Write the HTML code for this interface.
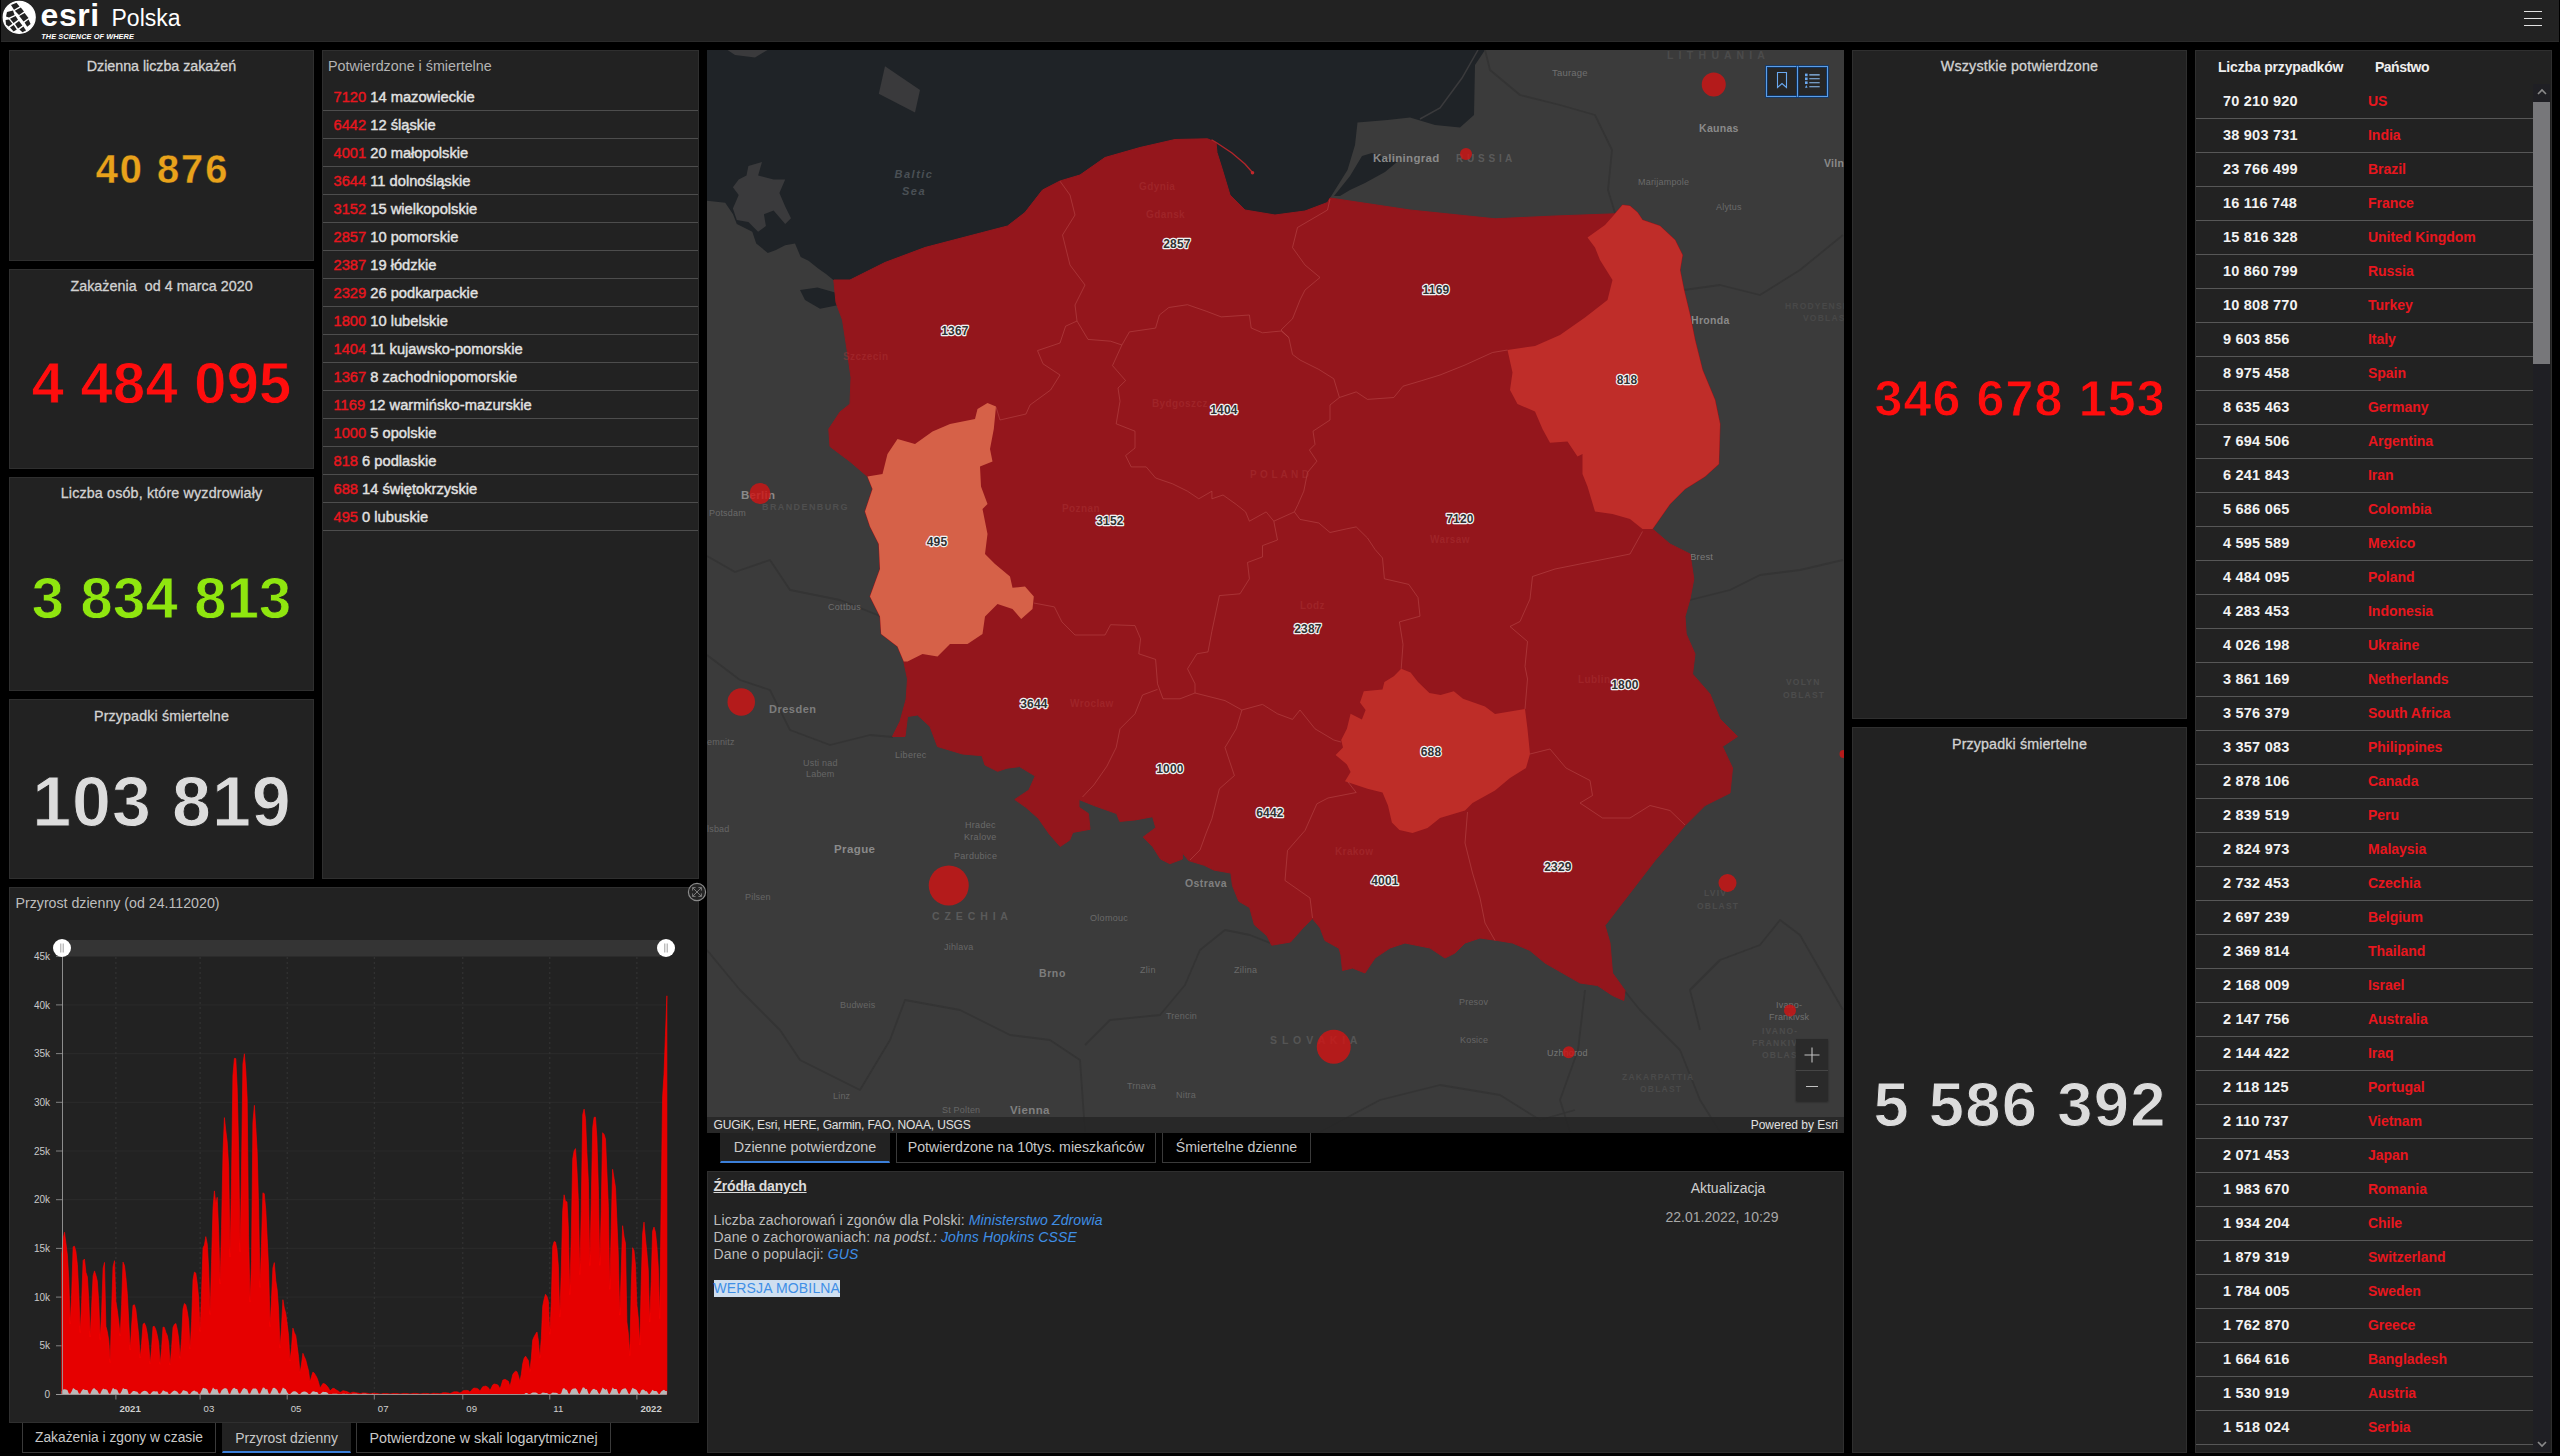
<!DOCTYPE html>
<html lang="pl"><head><meta charset="utf-8"><title>COVID-19 Polska</title>
<style>
html,body{margin:0;padding:0;background:#000;width:2560px;height:1456px;overflow:hidden;}
body{font-family:"Liberation Sans",sans-serif;color:#d4d4d4;position:relative;}
.abs{position:absolute;}
.panel{position:absolute;background:#222;border:1px solid #2f2f2f;box-sizing:border-box;overflow:hidden;}
#hdr{position:absolute;left:1px;top:0;width:2558px;height:42px;background:#222;border-bottom:1px solid #2b2b2b;box-sizing:border-box;}
.ptitle{position:absolute;left:0;right:0;text-align:center;font-size:14.3px;color:#d2d2d2;white-space:nowrap;-webkit-text-stroke:0.3px #d2d2d2;}
.big{position:absolute;left:0;right:0;text-align:center;white-space:nowrap;box-sizing:border-box;}
.t{position:absolute;white-space:nowrap;}
.lrow{position:absolute;left:0;right:0;height:28px;box-sizing:border-box;border-bottom:1px solid #4d4d4d;padding-left:10.5px;font-size:14.7px;line-height:29px;color:#e2e2e2;white-space:nowrap;-webkit-text-stroke:0.4px currentColor;}
.lrow .rn{color:#e8161e;-webkit-text-stroke:0.4px #e8161e;}
.crow{position:absolute;left:0;width:337px;height:34px;box-sizing:border-box;border-bottom:1px solid #575757;font-size:14.5px;line-height:33px;color:#f2f2f2;white-space:nowrap;font-weight:bold;}
.crow .cn{position:absolute;left:27px;letter-spacing:0.22px;}
.crow .cc{position:absolute;left:172px;color:#e8161e;font-size:14px;letter-spacing:-0.03px;}
.tab{position:absolute;height:30px;box-sizing:border-box;background:#000;border:1px solid #3a3a3a;border-top:none;color:#c8c8c8;font-size:13.8px;line-height:28px;text-align:center;white-space:nowrap;}
.tab.act{background:#222;border-color:#222;border-bottom:2px solid #3b7fd9;}
.src{font-size:14px;line-height:17px;color:#bdbdbd;letter-spacing:0.12px;}
.src .lk{color:#3f8fe6;}

</style></head>
<body>
<div id="hdr">
<svg class="abs" style="left:1px;top:0" width="40" height="40" viewBox="0 0 40 40">
<circle cx="17.2" cy="17.3" r="16" fill="#fff" stroke="#fff" stroke-width="1.2"/>
<g fill="#222">
<path d="M9 5 L14.5 2.8 L17.5 6.5 L12 9.8 Z"/>
<path d="M12.8 10.8 L18.8 7.6 L22 11.6 L17 15 Z"/>
<path d="M5 12 L11 10.6 L12.6 15 L7 17.6 L4 16.5 Z"/>
<path d="M8 18.8 L13.6 16 L16 19.8 L11.6 23 Z"/>
<path d="M3.6 20 L7 19.6 L10.4 23.8 L6.6 26.4 L4 24.5 Z"/>
<path d="M17.2 16 L22.6 13 L26.5 18 L21.6 21.4 Z"/>
<path d="M13 24 L17 21 L20.4 25.4 L16 28.6 Z"/>
<path d="M8 27.6 L11.8 25 L14.8 29.4 L11.6 31.5 Z"/>
<path d="M17.4 29.6 L21.4 26.6 L24 30.4 L20.4 32.2 Z"/>
<path d="M22.6 22.4 L26.6 19.6 L28.6 24 L25.2 26.8 Z"/>
</g>

</svg>
<div class="t" style="left:39.6px;top:-3.6px;font-size:32px;font-weight:bold;color:#fff;letter-spacing:0.55px;line-height:38px;">esri</div>
<div class="t" style="left:110.5px;top:4px;font-size:23px;color:#fff;line-height:28px;letter-spacing:0px;">Polska</div>
<div class="t" style="left:40.2px;top:31.5px;font-size:7.4px;font-weight:bold;font-style:italic;color:#fff;line-height:9px;letter-spacing:0.06px;">THE SCIENCE OF WHERE</div>
<div class="abs" style="left:2522.6px;top:10.8px;width:18.8px;height:1.4px;background:#e2e2e2"></div>
<div class="abs" style="left:2522.6px;top:17.9px;width:18.8px;height:1.4px;background:#e2e2e2"></div>
<div class="abs" style="left:2522.6px;top:24.8px;width:18.8px;height:1.4px;background:#e2e2e2"></div>
</div>

<div class="panel" style="left:9px;top:50px;width:305px;height:211px;">
 <div class="ptitle" style="top:7px;letter-spacing:-0.04px;">Dzienna liczba zakażeń</div>
 <div class="big" style="top:78.2px;font-size:39.8px;color:#e9a21b;line-height:80px;letter-spacing:2.0px;padding-left:2.0px;font-weight:bold;-webkit-text-stroke:0.3px #222;">40 876</div>
</div>
<div class="panel" style="left:9px;top:269px;width:305px;height:200px;">
 <div class="ptitle" style="top:8px;letter-spacing:0.04px;">Zakażenia&nbsp; od 4 marca 2020</div>
 <div class="big" style="top:73.1px;font-size:57.8px;color:#ff0d0d;line-height:80px;letter-spacing:0.3px;padding-left:0.3px;font-weight:bold;-webkit-text-stroke:0.8px #222;">4 484 095</div>
</div>
<div class="panel" style="left:9px;top:477px;width:305px;height:214px;">
 <div class="ptitle" style="top:7px;letter-spacing:0.15px;">Liczba osób, które wyzdrowiały</div>
 <div class="big" style="top:80.2px;font-size:57.8px;color:#8fe60f;line-height:80px;letter-spacing:0.3px;padding-left:0.3px;font-weight:bold;-webkit-text-stroke:0.8px #222;">3 834 813</div>
</div>
<div class="panel" style="left:9px;top:699px;width:305px;height:180px;">
 <div class="ptitle" style="top:8px;letter-spacing:0.115px;">Przypadki śmiertelne</div>
 <div class="big" style="top:62.4px;font-size:70px;color:#dcdcdc;line-height:80px;letter-spacing:0.9px;padding-left:0.9px;font-weight:bold;-webkit-text-stroke:1px #222;">103 819</div>
</div>
<div class="panel" style="left:322px;top:50px;width:377px;height:829px;">
 <div class="t" style="left:5px;top:7px;font-size:14.3px;color:#b4b4b4;">Potwierdzone i śmiertelne</div>
 <div class="lrow" style="top:32px;"><span class="rn">7120</span> 14 mazowieckie</div>
 <div class="lrow" style="top:60px;"><span class="rn">6442</span> 12 śląskie</div>
 <div class="lrow" style="top:88px;"><span class="rn">4001</span> 20 małopolskie</div>
 <div class="lrow" style="top:116px;"><span class="rn">3644</span> 11 dolnośląskie</div>
 <div class="lrow" style="top:144px;"><span class="rn">3152</span> 15 wielkopolskie</div>
 <div class="lrow" style="top:172px;"><span class="rn">2857</span> 10 pomorskie</div>
 <div class="lrow" style="top:200px;"><span class="rn">2387</span> 19 łódzkie</div>
 <div class="lrow" style="top:228px;"><span class="rn">2329</span> 26 podkarpackie</div>
 <div class="lrow" style="top:256px;"><span class="rn">1800</span> 10 lubelskie</div>
 <div class="lrow" style="top:284px;"><span class="rn">1404</span> 11 kujawsko-pomorskie</div>
 <div class="lrow" style="top:312px;"><span class="rn">1367</span> 8 zachodniopomorskie</div>
 <div class="lrow" style="top:340px;"><span class="rn">1169</span> 12 warmińsko-mazurskie</div>
 <div class="lrow" style="top:368px;"><span class="rn">1000</span> 5 opolskie</div>
 <div class="lrow" style="top:396px;"><span class="rn">818</span> 6 podlaskie</div>
 <div class="lrow" style="top:424px;"><span class="rn">688</span> 14 świętokrzyskie</div>
 <div class="lrow" style="top:452px;"><span class="rn">495</span> 0 lubuskie</div>
</div>

<div class="panel" style="left:9px;top:887px;width:690px;height:536px;"></div>
<svg class="abs" style="left:9px;top:887px;" width="690" height="536" viewBox="9 887 690 536" font-family="Liberation Sans, sans-serif">
<text x="15.5" y="908" font-size="14.2" fill="#bdbdbd">Przyrost dzienny (od 24.112020)</text>
<rect x="62" y="940" width="604" height="16.5" fill="#343434"/>
<line x1="56" x2="62.5" y1="1394.5" y2="1394.5" stroke="#9a9a9a" stroke-width="0.8"/>
<text x="50" y="1398.1" font-size="10" fill="#c9c9c9" text-anchor="end">0</text>
<line x1="63" x2="666" y1="1345.8" y2="1345.8" stroke="#292929" stroke-width="1.2"/>
<line x1="56" x2="62.5" y1="1345.8" y2="1345.8" stroke="#9a9a9a" stroke-width="0.8"/>
<text x="50" y="1349.4" font-size="10" fill="#c9c9c9" text-anchor="end">5k</text>
<line x1="63" x2="666" y1="1297.1" y2="1297.1" stroke="#292929" stroke-width="1.2"/>
<line x1="56" x2="62.5" y1="1297.1" y2="1297.1" stroke="#9a9a9a" stroke-width="0.8"/>
<text x="50" y="1300.7" font-size="10" fill="#c9c9c9" text-anchor="end">10k</text>
<line x1="63" x2="666" y1="1248.4" y2="1248.4" stroke="#292929" stroke-width="1.2"/>
<line x1="56" x2="62.5" y1="1248.4" y2="1248.4" stroke="#9a9a9a" stroke-width="0.8"/>
<text x="50" y="1252.0" font-size="10" fill="#c9c9c9" text-anchor="end">15k</text>
<line x1="63" x2="666" y1="1199.7" y2="1199.7" stroke="#292929" stroke-width="1.2"/>
<line x1="56" x2="62.5" y1="1199.7" y2="1199.7" stroke="#9a9a9a" stroke-width="0.8"/>
<text x="50" y="1203.3" font-size="10" fill="#c9c9c9" text-anchor="end">20k</text>
<line x1="63" x2="666" y1="1151.0" y2="1151.0" stroke="#292929" stroke-width="1.2"/>
<line x1="56" x2="62.5" y1="1151.0" y2="1151.0" stroke="#9a9a9a" stroke-width="0.8"/>
<text x="50" y="1154.6" font-size="10" fill="#c9c9c9" text-anchor="end">25k</text>
<line x1="63" x2="666" y1="1102.3" y2="1102.3" stroke="#292929" stroke-width="1.2"/>
<line x1="56" x2="62.5" y1="1102.3" y2="1102.3" stroke="#9a9a9a" stroke-width="0.8"/>
<text x="50" y="1105.9" font-size="10" fill="#c9c9c9" text-anchor="end">30k</text>
<line x1="63" x2="666" y1="1053.6" y2="1053.6" stroke="#292929" stroke-width="1.2"/>
<line x1="56" x2="62.5" y1="1053.6" y2="1053.6" stroke="#9a9a9a" stroke-width="0.8"/>
<text x="50" y="1057.2" font-size="10" fill="#c9c9c9" text-anchor="end">35k</text>
<line x1="63" x2="666" y1="1004.9" y2="1004.9" stroke="#292929" stroke-width="1.2"/>
<line x1="56" x2="62.5" y1="1004.9" y2="1004.9" stroke="#9a9a9a" stroke-width="0.8"/>
<text x="50" y="1008.5" font-size="10" fill="#c9c9c9" text-anchor="end">40k</text>
<line x1="56" x2="62.5" y1="956.2" y2="956.2" stroke="#9a9a9a" stroke-width="0.8"/>
<text x="50" y="959.8" font-size="10" fill="#c9c9c9" text-anchor="end">45k</text>
<line x1="115.9" x2="115.9" y1="957" y2="1394.5" stroke="#363636" stroke-width="1" stroke-dasharray="2 3"/>
<line x1="115.9" x2="115.9" y1="1394.5" y2="1399.5" stroke="#9a9a9a" stroke-width="0.8"/>
<text x="119.4" y="1411.6" font-size="9.6" fill="#cfcfcf" font-weight="bold">2021</text>
<line x1="200.1" x2="200.1" y1="957" y2="1394.5" stroke="#363636" stroke-width="1" stroke-dasharray="2 3"/>
<line x1="200.1" x2="200.1" y1="1394.5" y2="1399.5" stroke="#9a9a9a" stroke-width="0.8"/>
<text x="203.6" y="1411.6" font-size="9.6" fill="#cfcfcf">03</text>
<line x1="287.2" x2="287.2" y1="957" y2="1394.5" stroke="#363636" stroke-width="1" stroke-dasharray="2 3"/>
<line x1="287.2" x2="287.2" y1="1394.5" y2="1399.5" stroke="#9a9a9a" stroke-width="0.8"/>
<text x="290.7" y="1411.6" font-size="9.6" fill="#cfcfcf">05</text>
<line x1="374.3" x2="374.3" y1="957" y2="1394.5" stroke="#363636" stroke-width="1" stroke-dasharray="2 3"/>
<line x1="374.3" x2="374.3" y1="1394.5" y2="1399.5" stroke="#9a9a9a" stroke-width="0.8"/>
<text x="377.8" y="1411.6" font-size="9.6" fill="#cfcfcf">07</text>
<line x1="462.8" x2="462.8" y1="957" y2="1394.5" stroke="#363636" stroke-width="1" stroke-dasharray="2 3"/>
<line x1="462.8" x2="462.8" y1="1394.5" y2="1399.5" stroke="#9a9a9a" stroke-width="0.8"/>
<text x="466.3" y="1411.6" font-size="9.6" fill="#cfcfcf">09</text>
<line x1="549.8" x2="549.8" y1="957" y2="1394.5" stroke="#363636" stroke-width="1" stroke-dasharray="2 3"/>
<line x1="549.8" x2="549.8" y1="1394.5" y2="1399.5" stroke="#9a9a9a" stroke-width="0.8"/>
<text x="553.3" y="1411.6" font-size="9.6" fill="#cfcfcf">11</text>
<line x1="636.9" x2="636.9" y1="957" y2="1394.5" stroke="#363636" stroke-width="1" stroke-dasharray="2 3"/>
<line x1="636.9" x2="636.9" y1="1394.5" y2="1399.5" stroke="#9a9a9a" stroke-width="0.8"/>
<text x="640.4" y="1411.6" font-size="9.6" fill="#cfcfcf" font-weight="bold">2022</text>
<path d="M61.7,1394.5L61.7,1254.0L63.1,1239.0L64.5,1232.2L65.9,1243.1L67.4,1255.1L68.8,1279.4L70.2,1324.0L71.7,1292.8L73.1,1246.8L74.5,1246.3L75.9,1251.5L77.4,1264.7L78.8,1292.6L80.2,1332.5L81.6,1302.8L83.1,1260.5L84.5,1259.0L85.9,1272.3L87.4,1277.0L88.8,1299.7L90.2,1337.0L91.6,1306.3L93.1,1275.7L94.5,1270.9L95.9,1275.3L97.3,1281.1L98.8,1302.7L100.2,1339.5L101.6,1311.6L103.1,1268.3L104.5,1262.4L105.9,1326.2L107.3,1331.6L108.8,1340.4L110.2,1362.5L111.6,1309.3L113.0,1266.7L114.5,1260.7L115.9,1301.6L117.3,1310.2L118.8,1322.1L120.2,1335.8L121.6,1304.5L123.0,1262.1L124.5,1265.6L125.9,1277.5L127.3,1293.4L128.7,1319.8L130.2,1350.0L131.6,1326.0L133.0,1305.3L134.5,1304.8L135.9,1310.0L137.3,1322.7L138.7,1334.8L140.2,1358.0L141.6,1343.6L143.0,1324.2L144.4,1323.0L145.9,1326.5L147.3,1333.6L148.7,1344.3L150.2,1363.9L151.6,1347.6L153.0,1326.6L154.4,1326.4L155.9,1329.8L157.3,1335.4L158.7,1342.8L160.1,1364.2L161.6,1348.7L163.0,1327.1L164.4,1327.4L165.9,1332.4L167.3,1335.5L168.7,1342.8L170.1,1364.9L171.6,1347.7L173.0,1327.4L174.4,1324.4L175.9,1323.5L177.3,1329.5L178.7,1338.4L180.1,1358.2L181.6,1338.7L183.0,1309.1L184.4,1303.5L185.8,1304.7L187.3,1311.4L188.7,1320.7L190.1,1348.9L191.6,1321.4L193.0,1280.0L194.4,1272.1L195.8,1273.1L197.3,1283.9L198.7,1298.0L200.1,1331.4L201.5,1293.8L203.0,1247.9L204.4,1245.1L205.8,1236.6L207.3,1244.2L208.7,1269.1L210.1,1314.4L211.5,1262.6L213.0,1208.3L214.4,1190.9L215.8,1203.7L217.2,1197.3L218.7,1231.3L220.1,1283.8L221.5,1228.6L223.0,1152.7L224.4,1117.6L225.8,1130.6L227.2,1141.8L228.7,1166.6L230.1,1257.0L231.5,1179.3L232.9,1076.0L234.4,1058.4L235.8,1058.6L237.2,1087.8L238.7,1151.2L240.1,1251.7L241.5,1169.8L242.9,1064.1L244.4,1053.8L245.8,1071.1L247.2,1098.8L248.6,1235.8L250.1,1302.1L251.5,1261.3L252.9,1122.6L254.4,1105.3L255.8,1127.2L257.2,1151.7L258.6,1206.1L260.1,1287.4L261.5,1243.5L262.9,1192.8L264.3,1193.7L265.8,1210.4L267.2,1238.2L268.6,1268.1L270.1,1326.5L271.5,1299.0L272.9,1268.0L274.3,1262.6L275.8,1280.8L277.2,1289.9L278.6,1309.5L280.1,1348.0L281.5,1327.1L282.9,1299.7L284.3,1308.1L285.8,1313.4L287.2,1324.3L288.6,1335.6L290.0,1360.7L291.5,1347.9L292.9,1328.1L294.3,1332.5L295.8,1335.7L297.2,1346.3L298.6,1356.9L300.0,1372.9L301.5,1364.1L302.9,1353.3L304.3,1356.7L305.7,1359.8L307.2,1365.7L308.6,1371.0L310.0,1382.0L311.5,1376.5L312.9,1372.1L314.3,1373.2L315.7,1375.4L317.2,1378.3L318.6,1382.5L320.0,1387.9L321.4,1386.0L322.9,1383.5L324.3,1383.7L325.7,1384.6L327.2,1386.2L328.6,1388.1L330.0,1391.0L331.4,1389.5L332.9,1388.3L334.3,1388.5L335.7,1389.6L337.1,1390.4L338.6,1391.2L340.0,1392.5L341.4,1391.8L342.9,1390.7L344.3,1390.9L345.7,1391.3L347.1,1391.7L348.6,1392.3L350.0,1393.3L351.4,1392.7L352.8,1392.2L354.3,1392.3L355.7,1392.7L357.1,1392.9L358.6,1393.1L360.0,1393.7L361.4,1393.3L362.8,1392.9L364.3,1392.9L365.7,1393.1L367.1,1393.2L368.5,1393.5L370.0,1393.9L371.4,1393.6L372.8,1393.3L374.3,1393.3L375.7,1393.4L377.1,1393.5L378.5,1393.7L380.0,1394.1L381.4,1393.9L382.8,1393.5L384.3,1393.5L385.7,1393.6L387.1,1393.6L388.5,1393.7L390.0,1394.0L391.4,1393.8L392.8,1393.5L394.2,1393.5L395.7,1393.6L397.1,1393.6L398.5,1393.7L400.0,1394.0L401.4,1393.8L402.8,1393.5L404.2,1393.4L405.7,1393.5L407.1,1393.6L408.5,1393.7L409.9,1394.0L411.4,1393.8L412.8,1393.4L414.2,1393.4L415.7,1393.4L417.1,1393.6L418.5,1393.7L419.9,1394.0L421.4,1393.8L422.8,1393.4L424.2,1393.4L425.6,1393.4L427.1,1393.5L428.5,1393.6L429.9,1394.0L431.4,1393.7L432.8,1393.3L434.2,1393.3L435.6,1393.4L437.1,1393.4L438.5,1393.5L439.9,1393.8L441.3,1393.4L442.8,1392.8L444.2,1392.8L445.6,1392.7L447.1,1392.9L448.5,1393.0L449.9,1393.6L451.3,1393.0L452.8,1392.2L454.2,1391.8L455.6,1391.8L457.0,1391.8L458.5,1392.2L459.9,1393.0L461.3,1392.2L462.8,1390.9L464.2,1390.5L465.6,1390.4L467.0,1390.4L468.5,1390.8L469.9,1392.1L471.3,1390.6L472.8,1388.7L474.2,1388.1L475.6,1388.2L477.0,1388.4L478.5,1389.2L479.9,1391.2L481.3,1389.1L482.7,1386.8L484.2,1386.4L485.6,1386.1L487.0,1386.7L488.5,1387.8L489.9,1390.4L491.3,1388.1L492.7,1384.9L494.2,1384.0L495.6,1384.3L497.0,1384.6L498.4,1385.6L499.9,1388.8L501.3,1385.2L502.7,1380.3L504.2,1379.5L505.6,1379.6L507.0,1380.5L508.4,1381.3L509.9,1386.4L511.3,1381.0L512.7,1374.7L514.1,1372.5L515.6,1371.2L517.0,1371.7L518.4,1375.6L519.9,1381.5L521.3,1374.3L522.7,1363.8L524.1,1358.2L525.6,1356.2L527.0,1358.4L528.4,1360.5L529.8,1371.5L531.3,1358.2L532.7,1340.1L534.1,1336.8L535.6,1334.1L537.0,1332.0L538.4,1340.4L539.8,1357.9L541.3,1338.1L542.7,1306.3L544.1,1299.2L545.5,1294.3L547.0,1296.5L548.4,1301.2L549.8,1334.2L551.3,1302.3L552.7,1246.6L554.1,1241.6L555.5,1242.0L557.0,1249.6L558.4,1266.3L559.8,1316.9L561.2,1272.7L562.7,1210.4L564.1,1194.8L565.5,1201.5L567.0,1201.8L568.4,1228.3L569.8,1294.6L571.2,1237.3L572.7,1159.1L574.1,1150.9L575.5,1148.6L577.0,1170.6L578.4,1200.6L579.8,1274.5L581.2,1211.6L582.7,1114.7L584.1,1109.1L585.5,1118.4L586.9,1152.9L588.4,1181.5L589.8,1265.5L591.2,1203.9L592.7,1127.6L594.1,1117.3L595.5,1117.2L596.9,1138.0L598.4,1189.3L599.8,1265.3L601.2,1211.9L602.6,1132.7L604.1,1134.4L605.5,1139.0L606.9,1171.9L608.4,1206.5L609.8,1289.3L611.2,1228.4L612.6,1169.3L614.1,1178.5L615.5,1187.6L616.9,1220.7L618.3,1254.1L619.8,1315.1L621.2,1271.3L622.6,1225.7L624.1,1237.1L625.5,1243.3L626.9,1321.9L628.3,1333.0L629.8,1355.5L631.2,1288.4L632.6,1247.7L634.0,1250.4L635.5,1265.2L636.9,1305.0L638.3,1318.0L639.8,1345.0L641.2,1284.2L642.6,1234.0L644.0,1222.1L645.5,1239.1L646.9,1253.0L648.3,1269.9L649.7,1321.8L651.2,1281.4L652.6,1231.2L654.0,1227.0L655.5,1232.4L656.9,1246.2L658.3,1267.0L659.7,1318.5L661.2,1198.8L662.6,1096.9L664.0,1074.4L665.4,1035.7L666.9,995.8L666.9,1394.5Z" fill="#e60000" stroke="#f00" stroke-width="0.6" stroke-linejoin="round"/>
<path d="M61.7,1394.5L61.7,1391.3L63.1,1389.4L64.5,1389.2L65.9,1389.4L67.4,1390.0L68.8,1393.6L70.2,1393.8L71.7,1391.2L73.1,1387.9L74.5,1389.1L75.9,1390.1L77.4,1390.2L78.8,1393.6L80.2,1393.8L81.6,1390.9L83.1,1388.9L84.5,1389.7L85.9,1389.9L87.4,1390.0L88.8,1393.5L90.2,1393.9L91.6,1390.7L93.1,1388.5L94.5,1388.3L95.9,1389.8L97.3,1390.5L98.8,1393.4L100.2,1393.9L101.6,1390.8L103.1,1388.5L104.5,1389.2L105.9,1389.3L107.3,1390.0L108.8,1393.4L110.2,1393.9L111.6,1390.7L113.0,1387.8L114.5,1389.3L115.9,1389.2L117.3,1390.0L118.8,1393.6L120.2,1393.8L121.6,1391.2L123.0,1388.0L124.5,1389.0L125.9,1388.9L127.3,1389.4L128.7,1393.9L130.2,1394.1L131.6,1392.5L133.0,1391.1L134.5,1391.0L135.9,1391.5L137.3,1391.7L138.7,1393.8L140.2,1394.1L141.6,1392.2L143.0,1391.3L144.4,1390.7L145.9,1391.0L147.3,1391.7L148.7,1393.8L150.2,1394.2L151.6,1392.5L153.0,1391.3L154.4,1391.3L155.9,1391.4L157.3,1391.3L158.7,1393.9L160.1,1394.1L161.6,1392.5L163.0,1390.3L164.4,1391.0L165.9,1391.7L167.3,1391.8L168.7,1393.9L170.1,1394.1L171.6,1392.5L173.0,1391.3L174.4,1390.5L175.9,1391.1L177.3,1391.7L178.7,1393.8L180.1,1394.1L181.6,1392.4L183.0,1390.3L184.4,1390.6L185.8,1391.1L187.3,1391.6L188.7,1393.9L190.1,1394.1L191.6,1392.1L193.0,1390.9L194.4,1390.4L195.8,1391.4L197.3,1391.8L198.7,1393.9L200.1,1393.8L201.5,1390.7L203.0,1387.7L204.4,1388.2L205.8,1388.6L207.3,1389.6L208.7,1393.3L210.1,1393.8L211.5,1390.8L213.0,1387.4L214.4,1389.1L215.8,1389.6L217.2,1389.1L218.7,1393.3L220.1,1393.8L221.5,1390.6L223.0,1389.1L224.4,1388.2L225.8,1388.3L227.2,1389.0L228.7,1393.5L230.1,1393.9L231.5,1390.6L232.9,1388.4L234.4,1387.8L235.8,1389.1L237.2,1389.0L238.7,1393.3L240.1,1393.8L241.5,1391.2L242.9,1388.8L244.4,1388.0L245.8,1389.1L247.2,1389.5L248.6,1393.4L250.1,1393.8L251.5,1390.6L252.9,1388.6L254.4,1388.5L255.8,1388.6L257.2,1389.7L258.6,1393.4L260.1,1393.8L261.5,1390.6L262.9,1387.4L264.3,1387.8L265.8,1389.4L267.2,1388.9L268.6,1393.5L270.1,1393.9L271.5,1391.0L272.9,1387.9L274.3,1387.8L275.8,1388.7L277.2,1390.1L278.6,1393.3L280.1,1393.8L281.5,1390.7L282.9,1387.6L284.3,1388.6L285.8,1389.3L287.2,1392.3L288.6,1394.1L290.0,1394.2L291.5,1392.8L292.9,1391.6L294.3,1391.3L295.8,1391.6L297.2,1392.4L298.6,1394.0L300.0,1394.2L301.5,1392.5L302.9,1391.8L304.3,1391.4L305.7,1391.8L307.2,1392.5L308.6,1394.0L310.0,1394.2L311.5,1392.6L312.9,1391.3L314.3,1391.4L315.7,1392.1L317.2,1391.9L318.6,1394.0L320.0,1394.2L321.4,1392.9L322.9,1391.8L324.3,1391.9L325.7,1392.1L327.2,1392.4L328.6,1394.1L330.0,1394.2L331.4,1394.0L332.9,1393.7L334.3,1393.8L335.7,1393.8L337.1,1393.8L338.6,1394.4L340.0,1394.4L341.4,1394.0L342.9,1393.7L344.3,1393.8L345.7,1393.9L347.1,1393.8L348.6,1394.4L350.0,1394.4L351.4,1394.0L352.8,1393.8L354.3,1393.8L355.7,1393.8L357.1,1393.8L358.6,1394.4L360.0,1394.4L361.4,1394.0L362.8,1393.7L364.3,1393.7L365.7,1393.8L367.1,1393.9L368.5,1394.4L370.0,1394.4L371.4,1394.1L372.8,1393.7L374.3,1394.2L375.7,1394.2L377.1,1394.3L378.5,1394.5L380.0,1394.5L381.4,1394.3L382.8,1394.2L384.3,1394.2L385.7,1394.3L387.1,1394.3L388.5,1394.4L390.0,1394.5L391.4,1394.3L392.8,1394.3L394.2,1394.2L395.7,1394.2L397.1,1394.3L398.5,1394.4L400.0,1394.5L401.4,1394.3L402.8,1394.2L404.2,1394.3L405.7,1394.3L407.1,1394.3L408.5,1394.5L409.9,1394.5L411.4,1394.3L412.8,1394.2L414.2,1394.2L415.7,1394.3L417.1,1394.3L418.5,1394.5L419.9,1394.5L421.4,1394.3L422.8,1394.2L424.2,1394.2L425.6,1394.3L427.1,1394.3L428.5,1394.5L429.9,1394.5L431.4,1394.3L432.8,1394.2L434.2,1394.3L435.6,1394.2L437.1,1394.3L438.5,1394.5L439.9,1394.5L441.3,1394.3L442.8,1394.2L444.2,1394.2L445.6,1394.3L447.1,1394.3L448.5,1394.5L449.9,1394.5L451.3,1394.3L452.8,1394.2L454.2,1394.3L455.6,1394.2L457.0,1394.3L458.5,1394.5L459.9,1394.5L461.3,1394.3L462.8,1394.3L464.2,1394.2L465.6,1394.2L467.0,1394.3L468.5,1394.5L469.9,1394.5L471.3,1394.3L472.8,1394.2L474.2,1394.2L475.6,1394.3L477.0,1394.3L478.5,1394.4L479.9,1394.5L481.3,1394.3L482.7,1394.2L484.2,1394.2L485.6,1394.3L487.0,1394.3L488.5,1394.5L489.9,1394.5L491.3,1394.3L492.7,1394.2L494.2,1394.2L495.6,1394.3L497.0,1394.3L498.4,1394.5L499.9,1394.5L501.3,1394.3L502.7,1394.2L504.2,1394.2L505.6,1394.3L507.0,1394.3L508.4,1394.5L509.9,1394.5L511.3,1394.3L512.7,1394.2L514.1,1394.2L515.6,1394.2L517.0,1394.3L518.4,1394.4L519.9,1394.5L521.3,1394.4L522.7,1394.2L524.1,1394.2L525.6,1392.9L527.0,1393.1L528.4,1394.1L529.8,1394.3L531.3,1393.2L532.7,1392.5L534.1,1392.4L535.6,1392.5L537.0,1393.0L538.4,1394.2L539.8,1394.3L541.3,1393.4L542.7,1392.4L544.1,1392.7L545.5,1393.0L547.0,1392.9L548.4,1394.1L549.8,1394.3L551.3,1393.4L552.7,1392.4L554.1,1392.8L555.5,1392.7L557.0,1393.0L558.4,1394.1L559.8,1394.3L561.2,1393.3L562.7,1388.8L564.1,1388.1L565.5,1389.5L567.0,1389.9L568.4,1393.5L569.8,1393.8L571.2,1390.2L572.7,1388.8L574.1,1388.6L575.5,1388.3L577.0,1389.7L578.4,1393.3L579.8,1393.9L581.2,1390.8L582.7,1387.5L584.1,1387.6L585.5,1389.3L586.9,1388.9L588.4,1393.6L589.8,1393.9L591.2,1390.9L592.7,1389.2L594.1,1388.8L595.5,1389.7L596.9,1390.0L598.4,1393.3L599.8,1393.9L601.2,1390.7L602.6,1387.4L604.1,1388.7L605.5,1389.8L606.9,1389.1L608.4,1393.6L609.8,1393.9L611.2,1391.0L612.6,1387.5L614.1,1388.9L615.5,1388.9L616.9,1389.3L618.3,1393.5L619.8,1393.8L621.2,1390.5L622.6,1389.1L624.1,1388.5L625.5,1388.3L626.9,1390.0L628.3,1393.4L629.8,1393.9L631.2,1390.4L632.6,1387.7L634.0,1388.8L635.5,1389.3L636.9,1390.2L638.3,1393.3L639.8,1393.9L641.2,1390.6L642.6,1389.6L644.0,1389.8L645.5,1391.3L646.9,1391.2L648.3,1393.8L649.7,1394.1L651.2,1391.8L652.6,1389.8L654.0,1390.9L655.5,1391.0L656.9,1391.3L658.3,1393.8L659.7,1394.1L661.2,1391.6L662.6,1390.5L664.0,1389.8L665.4,1391.1L666.9,1391.0L666.9,1394.5Z" fill="#b9b9b9"/>
<line x1="62.5" x2="62.5" y1="957" y2="1394.5" stroke="#9a9a9a" stroke-width="0.9"/>
<line x1="56" x2="666.5" y1="1394.5" y2="1394.5" stroke="#9a9a9a" stroke-width="0.9"/>
<circle cx="62" cy="948" r="9" fill="#fff"/>
<line x1="60.8" x2="60.8" y1="943.5" y2="952.5" stroke="#888" stroke-width="0.8"/><line x1="63.2" x2="63.2" y1="943.5" y2="952.5" stroke="#888" stroke-width="0.8"/>
<circle cx="666" cy="948" r="9" fill="#fff"/>
<line x1="664.8" x2="664.8" y1="943.5" y2="952.5" stroke="#888" stroke-width="0.8"/><line x1="667.2" x2="667.2" y1="943.5" y2="952.5" stroke="#888" stroke-width="0.8"/>
</svg>
<svg class="abs" style="left:686px;top:881px" width="22" height="22" viewBox="0 0 22 22"><circle cx="11" cy="11" r="8.6" fill="#242424" stroke="#8a8a8a" stroke-width="1.2"/><path d="M6.6 9.6V6.6h3M12.4 6.6h3v3M15.4 12.4v3h-3M9.6 15.4h-3v-3M6.6 6.6L15.4 15.4M15.4 6.6L6.6 15.4" fill="none" stroke="#858585" stroke-width="0.9"/></svg>
<div class="tab" style="left:22px;top:1423px;width:194px;line-height:30px;">Zakażenia i zgony w czasie</div>
<div class="tab act" style="left:222px;top:1423px;width:129px;line-height:30px;font-size:13.9px;">Przyrost dzienny</div>
<div class="tab" style="left:356px;top:1423px;width:255px;line-height:30px;font-size:14.25px;">Potwierdzone w skali logarytmicznej</div>

<div class="abs" style="left:707px;top:50px;width:1137px;height:1083px;background:#3b3b3b;overflow:hidden;">
<svg class="abs" style="left:0;top:0" width="1137" height="1083" viewBox="707 50 1137 1083" font-family="Liberation Sans, sans-serif">
<polygon points="707.0,50.0 1485.0,50.0 1475.0,65.0 1474.0,115.0 1460.0,127.5 1435.0,125.0 1410.0,117.5 1387.5,120.0 1357.5,122.5 1355.0,145.0 1347.5,170.0 1330.0,198.0 1330.0,198.0 1327.5,202.5 1305.0,211.0 1275.0,215.0 1245.0,210.0 1230.0,195.0 1222.5,170.0 1217.0,152.5 1216.0,142.5 1207.5,138.8 1175.0,139.5 1140.0,147.5 1105.0,157.5 1080.0,175.0 1060.0,181.0 1042.5,190.0 1025.0,212.5 1007.5,226.0 982.5,232.5 925.0,247.5 885.0,262.5 850.0,280.0 833.8,280.0 833.7,280.2 826.0,274.0 818.2,268.6 808.5,260.8 800.7,257.0 795.0,243.4 785.2,245.3 776.0,250.0 767.8,253.0 756.2,243.4 752.3,231.8 736.8,224.0 733.0,214.3 725.2,202.7 707.0,200.8" fill="#1f2327"/>
<polygon points="748.4,165.9 762.0,162.0 758.1,175.6 773.6,179.5 785.2,179.5 779.4,193.0 785.2,206.6 791.0,218.2 785.2,224.0 773.6,210.5 763.9,214.3 765.9,226.0 758.1,231.8 748.4,222.1 736.8,220.1 732.9,208.5 738.7,195.0 732.9,187.2 738.7,179.5 746.5,175.6" fill="#3a3a3c"/>
<polygon points="885.0,66.2 920.0,90.0 915.0,112.5 878.8,93.8" fill="#3a3a3c"/>
<polygon points="727.5,50.0 767.5,50.0 755.0,57.5 735.0,55.0" fill="#3a3a3c"/>
<polygon points="800.0,290.0 817.5,287.5 835.0,292.5 838.8,305.0 820.0,308.8 805.0,300.0" fill="#1f2327"/>
<polygon points="1362.0,156.0 1372.0,153.0 1397.0,162.0 1385.0,172.0 1365.0,183.0 1350.0,190.0 1340.0,196.0 1334.0,196.0 1350.0,176.0" fill="#1f2327"/>
<path d="M1478,50 L1462,78 L1440,108 L1420,119" fill="none" stroke="#3a3a3c" stroke-width="1.5"/>
<path d="M707,556 L735,572 L770,560 L790,590 L840,600 L880,616" fill="none" stroke="#343434" stroke-width="1.8" stroke-linejoin="round"/>
<path d="M707,655 L740,680 L770,690 L790,730 L830,745 L870,735 L893,737" fill="none" stroke="#343434" stroke-width="1.8" stroke-linejoin="round"/>
<path d="M707,950 L740,990 L780,1030 L800,1060 L860,1090 L890,1040 L905,1000 L960,1010 L1010,1035 L1050,1040 L1080,1060 L1085,1132" fill="none" stroke="#343434" stroke-width="1.8" stroke-linejoin="round"/>
<path d="M1085,1045 L1110,1020 L1160,1015 L1185,985 L1200,950 L1225,930 L1250,935 L1270,943" fill="none" stroke="#343434" stroke-width="1.8" stroke-linejoin="round"/>
<path d="M1610,973 L1640,1010 L1680,1050 L1700,1100 L1720,1132" fill="none" stroke="#343434" stroke-width="1.8" stroke-linejoin="round"/>
<path d="M1585,990 L1578,1050 L1560,1100 L1570,1132" fill="none" stroke="#343434" stroke-width="1.8" stroke-linejoin="round"/>
<path d="M1615,213 L1608,190 L1612,150 L1595,115 L1560,105 L1520,95 L1490,70 L1485,50" fill="none" stroke="#343434" stroke-width="1.8" stroke-linejoin="round"/>
<path d="M1684,290 L1720,285 L1760,295 L1800,270 L1843,235" fill="none" stroke="#343434" stroke-width="1.8" stroke-linejoin="round"/>
<path d="M1690,600 L1730,590 L1760,575 L1800,570 L1843,560" fill="none" stroke="#343434" stroke-width="1.8" stroke-linejoin="round"/>
<path d="M1320,1132 L1380,1100 L1440,1085 L1500,1095 L1540,1120 L1575,1110" fill="none" stroke="#343434" stroke-width="1.8" stroke-linejoin="round"/>
<path d="M1700,1030 L1690,990 L1720,960 L1760,945 L1780,920 L1800,935 L1843,1010" fill="none" stroke="#343434" stroke-width="1.8" stroke-linejoin="round"/>
<text x="914" y="178" font-size="11" font-weight="bold" fill="#4a5055" text-anchor="middle" letter-spacing="1.5" font-style="italic">Baltic</text>
<text x="914" y="195" font-size="11" font-weight="bold" fill="#4a5055" text-anchor="middle" letter-spacing="1.5" font-style="italic">Sea</text>
<text x="1373" y="161.5" font-size="11.5" font-weight="bold" fill="#8a8a8a" text-anchor="start" letter-spacing="0.3">Kaliningrad</text>
<text x="1456" y="162" font-size="10" font-weight="bold" fill="#5a5a5a" text-anchor="start" letter-spacing="0.5">R U S S I A</text>
<text x="1552" y="76" font-size="9.5" font-weight="normal" fill="#707070" text-anchor="start" letter-spacing="0.2">Taurage</text>
<text x="1699" y="132" font-size="10.5" font-weight="bold" fill="#8a8a8a" text-anchor="start" letter-spacing="0.3">Kaunas</text>
<text x="1638" y="185" font-size="9" font-weight="normal" fill="#6a6a6a" text-anchor="start" letter-spacing="0.2">Marijampole</text>
<text x="1716" y="209.5" font-size="9" font-weight="normal" fill="#6a6a6a" text-anchor="start" letter-spacing="0.2">Alytus</text>
<text x="1691" y="324" font-size="10.5" font-weight="bold" fill="#8a8a8a" text-anchor="start" letter-spacing="0.3">Hronda</text>
<text x="1824" y="167" font-size="10.5" font-weight="bold" fill="#8a8a8a" text-anchor="start" letter-spacing="0.3">Viln</text>
<text x="1667" y="59" font-size="10.5" font-weight="bold" fill="#4b4b4b" text-anchor="start" letter-spacing="1.2">L I T H U A N I A</text>
<text x="741" y="499" font-size="11.5" font-weight="bold" fill="#8a8a8a" text-anchor="start" letter-spacing="0.3">Berlin</text>
<text x="709" y="516" font-size="9" font-weight="normal" fill="#6a6a6a" text-anchor="start" letter-spacing="0.2">Potsdam</text>
<text x="762" y="510" font-size="9" font-weight="bold" fill="#4f4f4f" text-anchor="start" letter-spacing="1.4">BRANDENBURG</text>
<text x="828" y="609.5" font-size="9" font-weight="normal" fill="#6f6f6f" text-anchor="start" letter-spacing="0.3">Cottbus</text>
<text x="769" y="713" font-size="11" font-weight="bold" fill="#7d7d7d" text-anchor="start" letter-spacing="0.5">Dresden</text>
<text x="707" y="745" font-size="9" font-weight="normal" fill="#666" text-anchor="start" letter-spacing="0.2">emnitz</text>
<text x="895" y="758" font-size="9" font-weight="normal" fill="#6a6a6a" text-anchor="start" letter-spacing="0.3">Liberec</text>
<text x="803" y="766" font-size="9" font-weight="normal" fill="#666" text-anchor="start" letter-spacing="0.2">Usti nad</text>
<text x="806" y="777" font-size="9" font-weight="normal" fill="#666" text-anchor="start" letter-spacing="0.2">Labem</text>
<text x="707" y="832" font-size="9" font-weight="normal" fill="#666" text-anchor="start" letter-spacing="0.2">lsbad</text>
<text x="834" y="853" font-size="11.5" font-weight="bold" fill="#8a8a8a" text-anchor="start" letter-spacing="0.4">Prague</text>
<text x="965" y="828" font-size="9" font-weight="normal" fill="#6a6a6a" text-anchor="start" letter-spacing="0.3">Hradec</text>
<text x="964" y="840" font-size="9" font-weight="normal" fill="#6a6a6a" text-anchor="start" letter-spacing="0.3">Kralove</text>
<text x="954" y="859" font-size="9" font-weight="normal" fill="#6a6a6a" text-anchor="start" letter-spacing="0.3">Pardubice</text>
<text x="745" y="900" font-size="9" font-weight="normal" fill="#666" text-anchor="start" letter-spacing="0.2">Pilsen</text>
<text x="932" y="920" font-size="10.5" font-weight="bold" fill="#5a5a5a" text-anchor="start" letter-spacing="1.0">C Z E C H I A</text>
<text x="944" y="949.5" font-size="9" font-weight="normal" fill="#666" text-anchor="start" letter-spacing="0.2">Jihlava</text>
<text x="1039" y="977" font-size="10.5" font-weight="bold" fill="#7d7d7d" text-anchor="start" letter-spacing="0.6">Brno</text>
<text x="1090" y="921" font-size="9" font-weight="normal" fill="#6a6a6a" text-anchor="start" letter-spacing="0.3">Olomouc</text>
<text x="1185" y="887" font-size="10.5" font-weight="bold" fill="#808080" text-anchor="start" letter-spacing="0.4">Ostrava</text>
<text x="1140" y="972.5" font-size="9" font-weight="normal" fill="#6a6a6a" text-anchor="start" letter-spacing="0.3">Zlin</text>
<text x="1234" y="973" font-size="9" font-weight="normal" fill="#6a6a6a" text-anchor="start" letter-spacing="0.3">Zilina</text>
<text x="840" y="1007.5" font-size="9" font-weight="normal" fill="#666" text-anchor="start" letter-spacing="0.2">Budweis</text>
<text x="1166" y="1018.5" font-size="9" font-weight="normal" fill="#666" text-anchor="start" letter-spacing="0.2">Trencin</text>
<text x="833" y="1099" font-size="9" font-weight="normal" fill="#666" text-anchor="start" letter-spacing="0.2">Linz</text>
<text x="942" y="1113" font-size="9" font-weight="normal" fill="#666" text-anchor="start" letter-spacing="0.2">St Polten</text>
<text x="1010" y="1114" font-size="11.5" font-weight="bold" fill="#808080" text-anchor="start" letter-spacing="0.4">Vienna</text>
<text x="1127" y="1089" font-size="9" font-weight="normal" fill="#666" text-anchor="start" letter-spacing="0.2">Trnava</text>
<text x="1176" y="1098" font-size="9" font-weight="normal" fill="#666" text-anchor="start" letter-spacing="0.2">Nitra</text>
<text x="1270" y="1044" font-size="10.5" font-weight="bold" fill="#555" text-anchor="start" letter-spacing="1.0">S L O V A K I A</text>
<text x="1459" y="1005" font-size="9" font-weight="normal" fill="#666" text-anchor="start" letter-spacing="0.2">Presov</text>
<text x="1460" y="1043" font-size="9" font-weight="normal" fill="#666" text-anchor="start" letter-spacing="0.2">Kosice</text>
<text x="1547" y="1056" font-size="9" font-weight="normal" fill="#777" text-anchor="start" letter-spacing="0.2">Uzhhorod</text>
<text x="1690" y="560" font-size="9.5" font-weight="normal" fill="#7a7a7a" text-anchor="start" letter-spacing="0.2">Brest</text>
<text x="1786" y="685" font-size="8.5" font-weight="bold" fill="#4c4c4c" text-anchor="start" letter-spacing="1.2">VOLYN</text>
<text x="1783" y="698" font-size="8.5" font-weight="bold" fill="#4c4c4c" text-anchor="start" letter-spacing="1.2">OBLAST</text>
<text x="1704" y="896" font-size="8.5" font-weight="bold" fill="#4c4c4c" text-anchor="start" letter-spacing="1.2">LVIV</text>
<text x="1697" y="909" font-size="8.5" font-weight="bold" fill="#4c4c4c" text-anchor="start" letter-spacing="1.2">OBLAST</text>
<text x="1776" y="1008" font-size="9" font-weight="normal" fill="#707070" text-anchor="start" letter-spacing="0.2">Ivano-</text>
<text x="1769" y="1020" font-size="9" font-weight="normal" fill="#707070" text-anchor="start" letter-spacing="0.2">Frankivsk</text>
<text x="1762" y="1034" font-size="8.5" font-weight="bold" fill="#4c4c4c" text-anchor="start" letter-spacing="1.2">IVANO-</text>
<text x="1752" y="1046" font-size="8.5" font-weight="bold" fill="#4c4c4c" text-anchor="start" letter-spacing="1.2">FRANKIVSK</text>
<text x="1762" y="1058" font-size="8.5" font-weight="bold" fill="#4c4c4c" text-anchor="start" letter-spacing="1.2">OBLAST</text>
<text x="1622" y="1080" font-size="8.5" font-weight="bold" fill="#4a4a4a" text-anchor="start" letter-spacing="1.2">ZAKARPATTIA</text>
<text x="1640" y="1092" font-size="8.5" font-weight="bold" fill="#4a4a4a" text-anchor="start" letter-spacing="1.2">OBLAST</text>
<text x="1785" y="309" font-size="8.5" font-weight="bold" fill="#484848" text-anchor="start" letter-spacing="1.2">HRODYENSKAYA</text>
<text x="1803" y="321" font-size="8.5" font-weight="bold" fill="#484848" text-anchor="start" letter-spacing="1.2">VOBLASC</text>
<polygon points="833.8,280.0 850.0,280.0 885.0,262.5 925.0,247.5 982.5,232.5 1007.5,226.0 1025.0,212.5 1042.5,190.0 1060.0,181.0 1080.0,175.0 1105.0,157.5 1140.0,147.5 1175.0,139.5 1207.5,138.8 1216.0,142.5 1217.0,152.5 1222.5,170.0 1230.0,195.0 1245.0,210.0 1275.0,215.0 1305.0,211.0 1327.5,202.5 1330.0,198.0 1410.0,210.0 1495.0,218.8 1555.0,216.0 1615.0,213.8 1622.5,205.0 1630.0,206.0 1637.5,212.5 1642.5,220.0 1660.0,226.0 1675.0,240.0 1682.5,255.0 1680.0,270.0 1684.0,290.0 1690.0,315.0 1695.0,340.0 1702.5,370.0 1715.0,400.0 1720.0,424.0 1718.8,464.0 1705.0,476.5 1685.0,489.0 1670.0,504.0 1652.5,529.0 1670.0,544.0 1690.0,554.0 1693.8,579.0 1690.0,599.0 1685.0,616.5 1686.2,634.0 1695.0,654.0 1692.5,674.0 1710.0,694.0 1720.0,719.0 1737.5,736.5 1722.5,746.5 1732.5,768.0 1730.0,793.0 1705.0,805.5 1685.0,825.5 1655.0,860.5 1630.0,893.0 1605.0,925.5 1610.0,943.0 1612.5,973.0 1625.0,990.5 1623.8,1000.5 1612.5,995.5 1597.5,985.5 1580.0,983.0 1562.5,973.0 1545.0,963.0 1530.0,950.5 1512.5,943.0 1497.5,940.5 1480.0,938.0 1465.0,943.0 1455.0,953.0 1445.0,958.0 1430.0,948.0 1405.0,943.0 1390.0,948.0 1375.0,958.0 1365.0,973.0 1352.5,968.0 1342.5,970.5 1341.0,955.0 1339.0,948.3 1324.9,940.5 1320.2,927.9 1312.4,918.5 1303.0,927.9 1290.5,942.0 1271.7,945.2 1267.0,935.8 1254.4,924.8 1249.7,907.6 1238.8,901.3 1232.5,885.7 1230.9,873.1 1213.7,870.0 1204.3,865.3 1188.7,860.6 1182.4,852.8 1182.4,859.0 1169.9,863.7 1160.5,859.0 1152.6,846.5 1143.2,837.1 1155.8,827.7 1152.6,816.7 1135.4,819.9 1119.7,821.4 1116.6,813.6 1094.7,805.8 1079.0,799.5 1079.0,807.3 1088.4,813.6 1090.0,829.3 1072.8,832.4 1069.6,840.2 1060.2,846.5 1049.3,834.0 1038.3,818.3 1025.8,807.3 1014.8,799.5 1029.0,790.0 1035.2,776.0 1019.5,766.6 1007.0,768.2 997.6,771.3 985.0,765.0 982.0,755.7 962.5,754.0 937.5,746.5 930.0,726.5 917.5,715.0 907.5,716.5 905.0,736.5 892.5,736.5 900.0,721.5 906.2,699.0 907.5,679.0 903.8,661.5 897.5,646.5 881.2,634.0 880.0,616.5 870.0,596.5 880.0,569.0 878.8,544.0 870.0,526.5 865.0,511.5 872.5,489.0 867.5,476.5 850.0,461.5 830.0,446.5 828.8,429.0 840.0,412.0 850.0,404.0 851.0,377.5 847.5,352.5 842.5,320.0 836.0,302.5" fill="#94161c" stroke="#94161c" stroke-width="1" stroke-linejoin="round"/>
<path d="M1212,140 L1217,143 L1232,153 L1245,164 L1252.5,172.5" fill="none" stroke="#b0252a" stroke-width="1.4" stroke-linecap="round"/><circle cx="1252.5" cy="172.8" r="1.8" fill="#c1282c"/>
<polygon points="1615.0,213.8 1622.5,205.0 1630.0,206.0 1637.5,212.5 1642.5,220.0 1660.0,226.0 1675.0,240.0 1682.5,255.0 1680.0,270.0 1684.0,290.0 1690.0,315.0 1695.0,340.0 1702.5,370.0 1715.0,400.0 1720.0,424.0 1718.8,464.0 1705.0,476.5 1685.0,489.0 1670.0,504.0 1652.5,529.0 1642.5,529.0 1630.0,519.0 1612.5,514.0 1595.0,511.5 1587.5,486.5 1582.5,474.0 1582.5,454.0 1577.5,456.5 1567.5,441.5 1550.0,442.8 1542.5,429.0 1535.0,411.5 1517.5,404.0 1510.0,390.0 1512.5,372.5 1507.5,350.0 1535.0,346.0 1560.0,335.0 1585.0,317.5 1607.5,300.0 1612.5,280.0 1600.0,260.0 1595.0,247.5 1587.5,237.5 1605.0,225.0" fill="#bf2d29"/>
<polygon points="1401.2,668.8 1410.6,672.5 1418.0,681.9 1429.4,693.0 1440.6,695.0 1453.8,691.2 1463.0,698.8 1485.0,706.5 1495.0,714.0 1525.0,709.0 1527.5,729.0 1530.0,754.0 1526.0,768.0 1510.0,778.0 1495.0,790.5 1472.5,803.0 1465.0,810.5 1440.0,818.0 1427.5,828.0 1412.5,833.0 1399.4,830.0 1391.9,822.5 1388.0,805.6 1382.5,792.5 1367.5,788.8 1356.2,785.0 1345.0,781.2 1350.6,771.9 1346.9,764.4 1335.6,755.0 1343.0,747.5 1341.2,740.0 1346.9,728.8 1350.6,713.8 1361.9,719.4 1365.6,710.0 1360.0,702.5 1363.8,691.2 1382.5,689.4 1384.4,681.9 1393.8,676.2" fill="#be2d28"/>
<polygon points="987.5,403.0 996.0,406.5 993.8,429.0 990.0,449.0 992.5,461.5 980.0,466.5 981.0,486.5 987.5,504.0 982.5,509.0 987.5,534.0 985.0,554.0 995.0,564.0 1010.0,576.5 1012.5,587.8 1025.0,586.5 1033.8,596.5 1032.5,609.0 1021.2,619.0 1012.5,609.0 997.5,604.0 985.0,616.5 982.5,634.0 967.5,644.0 950.0,644.0 937.5,656.5 922.5,654.0 907.5,661.5 903.8,661.5 897.5,646.5 881.2,634.0 880.0,616.5 870.0,596.5 880.0,569.0 878.8,544.0 870.0,526.5 865.0,511.5 872.5,489.0 867.5,476.5 882.5,474.0 887.5,454.0 897.5,439.0 915.0,444.0 932.5,431.5 950.0,424.0 975.0,419.0 977.5,409.0" fill="#d66148"/>
<polyline points="1060.0,181.2 1070.0,195.0 1075.0,215.0 1062.5,235.0 1070.0,265.0 1085.0,285.0 1075.0,305.0 1077.0,321.0" fill="none" stroke="#b94a4a" stroke-opacity="0.55" stroke-width="1" stroke-linejoin="round"/>
<polyline points="1077.0,321.0 1065.6,326.2 1060.0,343.0 1037.5,350.6 1043.0,363.8 1060.0,375.0 1050.6,390.0 1030.0,405.0 1026.0,414.0 1000.0,420.0 996.0,407.0" fill="none" stroke="#b94a4a" stroke-opacity="0.55" stroke-width="1" stroke-linejoin="round"/>
<polyline points="1077.0,321.0 1088.0,339.4 1110.6,341.2 1121.9,345.0" fill="none" stroke="#b94a4a" stroke-opacity="0.55" stroke-width="1" stroke-linejoin="round"/>
<polyline points="1129.4,331.9 1155.6,328.1 1159.4,315.0 1168.8,307.5 1187.5,304.7 1206.2,311.2 1221.2,316.9 1249.4,315.0 1251.2,328.0 1262.5,332.8 1281.2,331.0 1288.8,337.5 1292.5,354.4 1300.0,360.0 1318.8,369.4 1333.8,378.8 1339.4,397.5 1330.0,405.0 1330.0,420.0 1313.0,431.2 1315.0,444.4 1309.4,450.0 1316.9,461.2 1307.5,472.5 1303.8,491.2 1298.0,504.4 1294.4,511.9 1273.8,521.2 1266.2,511.9 1249.4,521.2 1245.6,511.9 1236.2,504.4 1223.0,495.0 1211.9,498.8 1211.9,491.2 1198.8,498.8 1187.5,491.2 1172.5,483.8 1155.6,478.0 1146.2,466.9 1131.2,466.9 1125.6,455.6 1135.0,448.0 1135.0,431.2 1116.2,423.8 1120.0,401.2 1118.0,388.0 1125.6,380.6 1112.5,365.6 1121.9,345.0 1129.4,331.9" fill="none" stroke="#b94a4a" stroke-opacity="0.55" stroke-width="1" stroke-linejoin="round"/>
<polyline points="1288.8,337.5 1281.0,330.0 1292.5,318.8 1300.0,300.0 1305.0,290.0 1320.0,277.5 1305.0,265.0 1292.5,247.5 1297.5,227.5 1327.5,210.0 1330.0,199.0" fill="none" stroke="#b94a4a" stroke-opacity="0.55" stroke-width="1" stroke-linejoin="round"/>
<polyline points="1339.4,397.5 1356.2,391.9 1367.5,399.4 1393.8,397.5 1403.0,386.2 1421.9,380.6 1440.0,375.0 1465.0,365.0 1492.5,352.5 1507.5,350.0" fill="none" stroke="#b94a4a" stroke-opacity="0.55" stroke-width="1" stroke-linejoin="round"/>
<polyline points="1294.4,511.9 1300.0,519.4 1318.8,523.0 1330.0,532.5 1346.9,528.8 1356.2,526.9 1367.5,538.0 1375.0,549.4 1382.5,558.0 1384.4,578.8 1408.8,584.4 1418.0,597.5 1420.0,616.2 1399.4,621.9 1403.0,644.4 1401.2,668.8" fill="none" stroke="#b94a4a" stroke-opacity="0.55" stroke-width="1" stroke-linejoin="round"/>
<polyline points="1273.8,521.2 1277.5,540.0 1262.5,545.6 1262.5,556.9 1247.5,562.5 1249.4,578.8 1240.0,593.8 1219.4,595.6 1211.9,631.2 1208.0,651.9 1196.9,653.8 1187.5,668.8 1195.0,683.8 1195.0,693.0" fill="none" stroke="#b94a4a" stroke-opacity="0.55" stroke-width="1" stroke-linejoin="round"/>
<polyline points="1033.8,603.0 1054.4,606.9 1061.9,621.9 1075.0,635.0 1105.0,635.0 1110.6,624.7 1135.0,625.6 1140.6,638.8 1138.8,653.8 1155.6,659.4 1157.5,683.8 1163.0,698.8 1180.0,698.8 1195.0,693.0" fill="none" stroke="#b94a4a" stroke-opacity="0.55" stroke-width="1" stroke-linejoin="round"/>
<polyline points="1157.5,689.4 1142.5,695.0 1135.0,713.8 1120.0,728.8 1116.2,747.5 1106.9,766.2 1093.8,785.0 1082.5,797.0" fill="none" stroke="#b94a4a" stroke-opacity="0.55" stroke-width="1" stroke-linejoin="round"/>
<polyline points="1195.0,693.0 1225.0,700.6 1241.9,710.0 1262.5,704.4 1277.5,713.8 1292.5,719.4 1300.0,710.0 1315.0,728.8 1333.8,740.0 1341.0,742.0" fill="none" stroke="#b94a4a" stroke-opacity="0.55" stroke-width="1" stroke-linejoin="round"/>
<polyline points="1241.9,710.0 1236.2,728.8 1225.0,747.5 1234.4,775.6 1219.4,788.8 1211.9,818.8 1206.2,833.0 1200.0,850.0 1190.0,860.0" fill="none" stroke="#b94a4a" stroke-opacity="0.55" stroke-width="1" stroke-linejoin="round"/>
<polyline points="1348.0,782.0 1356.2,792.5 1328.0,798.0 1316.9,803.8 1305.0,830.5 1287.5,850.5 1285.0,880.5 1310.0,898.0 1312.5,918.0" fill="none" stroke="#b94a4a" stroke-opacity="0.55" stroke-width="1" stroke-linejoin="round"/>
<polyline points="1467.5,812.0 1465.0,843.0 1472.5,873.0 1480.0,898.0 1485.0,923.0 1495.0,940.5" fill="none" stroke="#b94a4a" stroke-opacity="0.55" stroke-width="1" stroke-linejoin="round"/>
<polyline points="1642.5,531.5 1630.0,554.0 1605.0,559.0 1580.0,564.0 1555.0,569.0 1532.5,576.5 1530.0,599.0 1520.0,621.5 1510.0,626.5 1527.5,641.5 1525.0,666.5 1527.5,679.0 1525.0,709.0" fill="none" stroke="#b94a4a" stroke-opacity="0.55" stroke-width="1" stroke-linejoin="round"/>
<polyline points="1530.0,754.0 1550.0,749.0 1566.0,768.0 1590.0,780.5 1592.5,795.5 1580.0,803.0 1602.5,818.0 1630.0,818.0 1650.0,805.5 1670.0,810.5 1685.0,825.0" fill="none" stroke="#b94a4a" stroke-opacity="0.55" stroke-width="1" stroke-linejoin="round"/>
<text x="1146" y="218" font-size="10" font-weight="bold" fill="#b23c3c" fill-opacity="0.38" letter-spacing="0.4">Gdansk</text>
<text x="1139" y="189.5" font-size="10" font-weight="bold" fill="#b23c3c" fill-opacity="0.38" letter-spacing="0.4">Gdynia</text>
<text x="843" y="360" font-size="10" font-weight="bold" fill="#b23c3c" fill-opacity="0.38" letter-spacing="0.4">Szczecin</text>
<text x="1152" y="407" font-size="10" font-weight="bold" fill="#b23c3c" fill-opacity="0.38" letter-spacing="0.4">Bydgoszcz</text>
<text x="1062" y="512" font-size="10" font-weight="bold" fill="#b23c3c" fill-opacity="0.38" letter-spacing="0.4">Poznan</text>
<text x="1430" y="543" font-size="10" font-weight="bold" fill="#b23c3c" fill-opacity="0.38" letter-spacing="0.4">Warsaw</text>
<text x="1300" y="608.5" font-size="10" font-weight="bold" fill="#b23c3c" fill-opacity="0.38" letter-spacing="0.4">Lodz</text>
<text x="1070" y="706.5" font-size="10" font-weight="bold" fill="#b23c3c" fill-opacity="0.38" letter-spacing="0.4">Wroclaw</text>
<text x="1578" y="683" font-size="10" font-weight="bold" fill="#b23c3c" fill-opacity="0.38" letter-spacing="0.4">Lublin</text>
<text x="1335" y="855" font-size="10" font-weight="bold" fill="#b23c3c" fill-opacity="0.38" letter-spacing="0.4">Krakow</text>
<text x="1250" y="478" font-size="10" font-weight="bold" fill="#b23c3c" fill-opacity="0.38" letter-spacing="0.4">P O L A N D</text>
<circle cx="1713.75" cy="84.5" r="12" fill="#d01515" fill-opacity="0.82"/>
<circle cx="1466" cy="154" r="6" fill="#d01515" fill-opacity="0.82"/>
<circle cx="760" cy="493.5" r="10.5" fill="#d01515" fill-opacity="0.82"/>
<circle cx="741.25" cy="702" r="13.75" fill="#d01515" fill-opacity="0.82"/>
<circle cx="948.75" cy="885.5" r="20" fill="#d01515" fill-opacity="0.82"/>
<circle cx="1333.75" cy="1046.75" r="17" fill="#d01515" fill-opacity="0.82"/>
<circle cx="1727.5" cy="883" r="9" fill="#d01515" fill-opacity="0.82"/>
<circle cx="1790" cy="1010.5" r="6" fill="#d01515" fill-opacity="0.82"/>
<circle cx="1568.75" cy="1052.25" r="6" fill="#d01515" fill-opacity="0.82"/>
<circle cx="1843.5" cy="754" r="4" fill="#d01515" fill-opacity="0.82"/>
<text x="1177" y="248.2" font-size="12" font-weight="bold" text-anchor="middle" fill="#303030" stroke="#f2f2f2" stroke-width="2.4" stroke-linejoin="round" paint-order="stroke" letter-spacing="0.2">2857</text>
<text x="1436" y="294.2" font-size="12" font-weight="bold" text-anchor="middle" fill="#303030" stroke="#f2f2f2" stroke-width="2.4" stroke-linejoin="round" paint-order="stroke" letter-spacing="0.2">1169</text>
<text x="955" y="335.2" font-size="12" font-weight="bold" text-anchor="middle" fill="#303030" stroke="#f2f2f2" stroke-width="2.4" stroke-linejoin="round" paint-order="stroke" letter-spacing="0.2">1367</text>
<text x="1627" y="384.2" font-size="12" font-weight="bold" text-anchor="middle" fill="#303030" stroke="#f2f2f2" stroke-width="2.4" stroke-linejoin="round" paint-order="stroke" letter-spacing="0.2">818</text>
<text x="1224" y="414.2" font-size="12" font-weight="bold" text-anchor="middle" fill="#303030" stroke="#f2f2f2" stroke-width="2.4" stroke-linejoin="round" paint-order="stroke" letter-spacing="0.2">1404</text>
<text x="1110" y="525.2" font-size="12" font-weight="bold" text-anchor="middle" fill="#303030" stroke="#f2f2f2" stroke-width="2.4" stroke-linejoin="round" paint-order="stroke" letter-spacing="0.2">3152</text>
<text x="1460" y="522.7" font-size="12" font-weight="bold" text-anchor="middle" fill="#303030" stroke="#f2f2f2" stroke-width="2.4" stroke-linejoin="round" paint-order="stroke" letter-spacing="0.2">7120</text>
<text x="937" y="545.7" font-size="12" font-weight="bold" text-anchor="middle" fill="#303030" stroke="#f2f2f2" stroke-width="2.4" stroke-linejoin="round" paint-order="stroke" letter-spacing="0.2">495</text>
<text x="1308" y="633.2" font-size="12" font-weight="bold" text-anchor="middle" fill="#303030" stroke="#f2f2f2" stroke-width="2.4" stroke-linejoin="round" paint-order="stroke" letter-spacing="0.2">2387</text>
<text x="1034" y="708.2" font-size="12" font-weight="bold" text-anchor="middle" fill="#303030" stroke="#f2f2f2" stroke-width="2.4" stroke-linejoin="round" paint-order="stroke" letter-spacing="0.2">3644</text>
<text x="1625" y="688.7" font-size="12" font-weight="bold" text-anchor="middle" fill="#303030" stroke="#f2f2f2" stroke-width="2.4" stroke-linejoin="round" paint-order="stroke" letter-spacing="0.2">1800</text>
<text x="1431" y="755.7" font-size="12" font-weight="bold" text-anchor="middle" fill="#303030" stroke="#f2f2f2" stroke-width="2.4" stroke-linejoin="round" paint-order="stroke" letter-spacing="0.2">688</text>
<text x="1170" y="772.7" font-size="12" font-weight="bold" text-anchor="middle" fill="#303030" stroke="#f2f2f2" stroke-width="2.4" stroke-linejoin="round" paint-order="stroke" letter-spacing="0.2">1000</text>
<text x="1270" y="817.2" font-size="12" font-weight="bold" text-anchor="middle" fill="#303030" stroke="#f2f2f2" stroke-width="2.4" stroke-linejoin="round" paint-order="stroke" letter-spacing="0.2">6442</text>
<text x="1385" y="884.7" font-size="12" font-weight="bold" text-anchor="middle" fill="#303030" stroke="#f2f2f2" stroke-width="2.4" stroke-linejoin="round" paint-order="stroke" letter-spacing="0.2">4001</text>
<text x="1558" y="870.7" font-size="12" font-weight="bold" text-anchor="middle" fill="#303030" stroke="#f2f2f2" stroke-width="2.4" stroke-linejoin="round" paint-order="stroke" letter-spacing="0.2">2329</text>
</svg>
<div class="abs" style="left:1059px;top:16px;width:62px;height:31px;box-sizing:border-box;border:1px solid #5b9ee8;background:#262626;box-shadow:0 0 0 1px rgba(10,58,120,0.7), inset 0 0 0 1px rgba(10,58,120,0.7);"></div>
<div class="abs" style="left:1089.5px;top:16px;width:1px;height:31px;background:#5b9ee8;box-shadow:0 0 0 1px rgba(10,58,120,0.6);"></div>
<svg class="abs" style="left:1067px;top:21px" width="16" height="20" viewBox="0 0 16 20"><path d="M3.5 1.5H12.5V16.5L8 12.6L3.5 16.5Z" fill="none" stroke="#6aa9f0" stroke-width="1.1"/></svg>
<svg class="abs" style="left:1095px;top:21px" width="22" height="20" viewBox="0 0 22 20"><g fill="#6aa9f0"><rect x="3" y="2.6" width="2.6" height="2.6"/><rect x="3" y="6.5" width="2.6" height="2.6"/><rect x="3" y="10.4" width="2.6" height="2.6"/><path d="M3 16.8L4.3 14L5.6 16.8Z"/></g><g stroke="#8fc0f5" stroke-width="1.1"><path d="M7.3 3.9H17.7M7.3 7.8H17.7M7.3 11.7H17.7M7.3 15.7H17.7"/></g></svg>
<div class="abs" style="left:1089px;top:989px;width:32px;height:62px;background:#2a2a2a;box-shadow:0 1px 2px rgba(0,0,0,.4);"></div>
<div class="abs" style="left:1089px;top:1020px;width:32px;height:1px;background:#454545;"></div>
<svg class="abs" style="left:1089px;top:989px" width="32" height="63" viewBox="0 0 32 63"><path d="M8.5 16H23.5M16 8.5V23.5M10 47.5H22" stroke="#c2c2c2" stroke-width="1.1" fill="none"/></svg>
<div class="abs" style="left:0;top:1067px;width:1137px;height:16px;background:rgba(36,36,36,0.82);"></div>
<div class="t" style="left:6.5px;top:1067px;font-size:12px;line-height:16px;color:#e0e0e0;letter-spacing:-0.15px;">GUGiK, Esri, HERE, Garmin, FAO, NOAA, USGS</div>
<div class="t" style="right:6px;top:1067px;font-size:12px;line-height:16px;color:#e0e0e0;">Powered by Esri</div>
</div>
<div class="tab act" style="left:720px;top:1133px;width:170px;height:30px;line-height:29px;font-size:14.4px;">Dzienne potwierdzone</div>
<div class="tab" style="left:896px;top:1133px;width:260px;height:30px;line-height:29px;font-size:14.2px;">Potwierdzone na 10tys. mieszkańców</div>
<div class="tab" style="left:1162px;top:1133px;width:149px;height:30px;line-height:29px;font-size:14.2px;">Śmiertelne dzienne</div>

<div class="panel" style="left:707px;top:1171px;width:1137px;height:282px;">
 <div class="t" style="left:5.5px;top:6px;font-size:14px;font-weight:bold;color:#dcdcdc;text-decoration:underline;line-height:17px;letter-spacing:-0.2px;">Źródła danych</div>
 <div class="t src" style="left:5.5px;top:40px;">Liczba zachorowań i zgonów dla Polski: <i class="lk">Ministerstwo Zdrowia</i></div>
 <div class="t src" style="left:5.5px;top:57px;">Dane o zachorowaniach: <i>na podst.:</i> <i class="lk">Johns Hopkins CSSE</i></div>
 <div class="t src" style="left:5.5px;top:74px;">Dane o populacji: <i class="lk">GUS</i></div>
 <div class="t" style="left:5.5px;top:108px;font-size:14px;line-height:17px;color:#3f8fe6;background:#cfdff0;letter-spacing:0.15px;">WERSJA MOBILNA</div>
 <div class="t" style="left:940px;width:160px;text-align:center;top:8px;font-size:14px;line-height:17px;color:#cfcfcf;">Aktualizacja</div>
 <div class="t" style="left:934px;width:160px;text-align:center;top:37px;font-size:14px;line-height:17px;color:#a8a8a8;">22.01.2022, 10:29</div>
</div>

<div class="panel" style="left:1852px;top:50px;width:335px;height:669px;">
 <div class="ptitle" style="top:7px;letter-spacing:0.19px;">Wszystkie potwierdzone</div>
 <div class="big" style="top:307.5px;font-size:50px;color:#ff0d0d;line-height:80px;letter-spacing:1.2px;padding-left:1.2px;font-weight:bold;-webkit-text-stroke:0.8px #222;">346 678 153</div>
</div>
<div class="panel" style="left:1852px;top:727px;width:335px;height:726px;">
 <div class="ptitle" style="top:8px;letter-spacing:0.115px;">Przypadki śmiertelne</div>
 <div class="big" style="top:335.8px;font-size:63.4px;color:#dcdcdc;line-height:80px;letter-spacing:1.25px;padding-left:1.25px;font-weight:bold;-webkit-text-stroke:1px #222;">5 586 392</div>
</div>
<div class="panel" style="left:2195px;top:50px;width:357px;height:1403px;">
 <div class="t" style="left:22px;top:8px;font-size:14px;font-weight:bold;color:#eee;letter-spacing:-0.18px;">Liczba przypadków</div>
 <div class="t" style="left:179px;top:8px;font-size:14px;font-weight:bold;color:#eee;letter-spacing:-0.5px;">Państwo</div>
 <div class="abs" style="left:337px;top:33px;width:17px;height:1369px;background:#1f1f24;"></div>
 <div class="abs" style="left:337px;top:51px;width:17px;height:262px;background:#77777a;"></div>
 <svg class="abs" style="left:340px;top:36px" width="12" height="10" viewBox="0 0 12 10"><path d="M2 7 L6 3 L10 7" fill="none" stroke="#8a8a8a" stroke-width="1.6"/></svg>
 <svg class="abs" style="left:340px;top:1388px" width="12" height="10" viewBox="0 0 12 10"><path d="M2 3 L6 7 L10 3" fill="none" stroke="#8a8a8a" stroke-width="1.6"/></svg>
 <div class="crow" style="top:34px;"><span class="cn">70 210 920</span><span class="cc">US</span></div>
 <div class="crow" style="top:68px;"><span class="cn">38 903 731</span><span class="cc">India</span></div>
 <div class="crow" style="top:102px;"><span class="cn">23 766 499</span><span class="cc">Brazil</span></div>
 <div class="crow" style="top:136px;"><span class="cn">16 116 748</span><span class="cc">France</span></div>
 <div class="crow" style="top:170px;"><span class="cn">15 816 328</span><span class="cc">United Kingdom</span></div>
 <div class="crow" style="top:204px;"><span class="cn">10 860 799</span><span class="cc">Russia</span></div>
 <div class="crow" style="top:238px;"><span class="cn">10 808 770</span><span class="cc">Turkey</span></div>
 <div class="crow" style="top:272px;"><span class="cn">9 603 856</span><span class="cc">Italy</span></div>
 <div class="crow" style="top:306px;"><span class="cn">8 975 458</span><span class="cc">Spain</span></div>
 <div class="crow" style="top:340px;"><span class="cn">8 635 463</span><span class="cc">Germany</span></div>
 <div class="crow" style="top:374px;"><span class="cn">7 694 506</span><span class="cc">Argentina</span></div>
 <div class="crow" style="top:408px;"><span class="cn">6 241 843</span><span class="cc">Iran</span></div>
 <div class="crow" style="top:442px;"><span class="cn">5 686 065</span><span class="cc">Colombia</span></div>
 <div class="crow" style="top:476px;"><span class="cn">4 595 589</span><span class="cc">Mexico</span></div>
 <div class="crow" style="top:510px;"><span class="cn">4 484 095</span><span class="cc">Poland</span></div>
 <div class="crow" style="top:544px;"><span class="cn">4 283 453</span><span class="cc">Indonesia</span></div>
 <div class="crow" style="top:578px;"><span class="cn">4 026 198</span><span class="cc">Ukraine</span></div>
 <div class="crow" style="top:612px;"><span class="cn">3 861 169</span><span class="cc">Netherlands</span></div>
 <div class="crow" style="top:646px;"><span class="cn">3 576 379</span><span class="cc">South Africa</span></div>
 <div class="crow" style="top:680px;"><span class="cn">3 357 083</span><span class="cc">Philippines</span></div>
 <div class="crow" style="top:714px;"><span class="cn">2 878 106</span><span class="cc">Canada</span></div>
 <div class="crow" style="top:748px;"><span class="cn">2 839 519</span><span class="cc">Peru</span></div>
 <div class="crow" style="top:782px;"><span class="cn">2 824 973</span><span class="cc">Malaysia</span></div>
 <div class="crow" style="top:816px;"><span class="cn">2 732 453</span><span class="cc">Czechia</span></div>
 <div class="crow" style="top:850px;"><span class="cn">2 697 239</span><span class="cc">Belgium</span></div>
 <div class="crow" style="top:884px;"><span class="cn">2 369 814</span><span class="cc">Thailand</span></div>
 <div class="crow" style="top:918px;"><span class="cn">2 168 009</span><span class="cc">Israel</span></div>
 <div class="crow" style="top:952px;"><span class="cn">2 147 756</span><span class="cc">Australia</span></div>
 <div class="crow" style="top:986px;"><span class="cn">2 144 422</span><span class="cc">Iraq</span></div>
 <div class="crow" style="top:1020px;"><span class="cn">2 118 125</span><span class="cc">Portugal</span></div>
 <div class="crow" style="top:1054px;"><span class="cn">2 110 737</span><span class="cc">Vietnam</span></div>
 <div class="crow" style="top:1088px;"><span class="cn">2 071 453</span><span class="cc">Japan</span></div>
 <div class="crow" style="top:1122px;"><span class="cn">1 983 670</span><span class="cc">Romania</span></div>
 <div class="crow" style="top:1156px;"><span class="cn">1 934 204</span><span class="cc">Chile</span></div>
 <div class="crow" style="top:1190px;"><span class="cn">1 879 319</span><span class="cc">Switzerland</span></div>
 <div class="crow" style="top:1224px;"><span class="cn">1 784 005</span><span class="cc">Sweden</span></div>
 <div class="crow" style="top:1258px;"><span class="cn">1 762 870</span><span class="cc">Greece</span></div>
 <div class="crow" style="top:1292px;"><span class="cn">1 664 616</span><span class="cc">Bangladesh</span></div>
 <div class="crow" style="top:1326px;"><span class="cn">1 530 919</span><span class="cc">Austria</span></div>
 <div class="crow" style="top:1360px;"><span class="cn">1 518 024</span><span class="cc">Serbia</span></div>
</div>

</body></html>
